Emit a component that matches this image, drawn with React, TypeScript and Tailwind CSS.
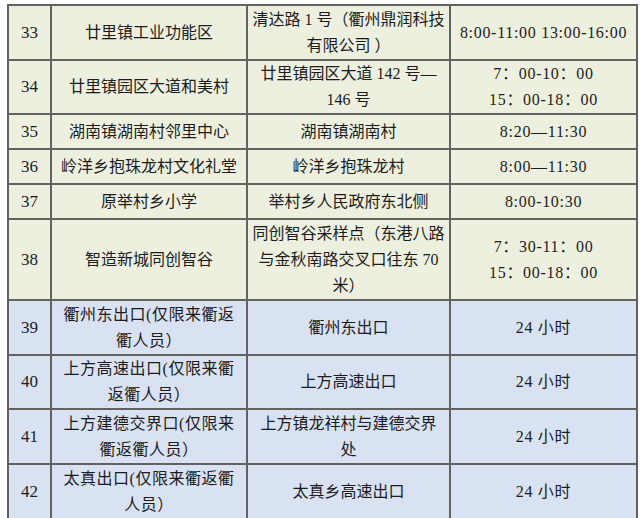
import React from "react";

type Row = {
  no: string;
  name: string[];
  addr: string[];
  time: string[];
  h: string;
  blue?: boolean;
};

const rows: Row[] = [
  { no: "33", name: ["廿里镇工业功能区"], addr: ["清达路 1 号（衢州鼎润科技", "有限公司 ）"], time: ["8:00-11:00 13:00-16:00"], h: "h-[55px]" },
  { no: "34", name: ["廿里镇园区大道和美村"], addr: ["廿里镇园区大道 142 号—", "146 号"], time: ["7：00-10：00", "15：00-18：00"], h: "h-[54px]" },
  { no: "35", name: ["湖南镇湖南村邻里中心"], addr: ["湖南镇湖南村"], time: ["8:20—11:30"], h: "h-[35px]" },
  { no: "36", name: ["岭洋乡抱珠龙村文化礼堂"], addr: ["岭洋乡抱珠龙村"], time: ["8:00—11:30"], h: "h-[35px]" },
  { no: "37", name: ["原举村乡小学"], addr: ["举村乡人民政府东北侧"], time: ["8:00-10:30"], h: "h-[35px]" },
  { no: "38", name: ["智造新城同创智谷"], addr: ["同创智谷采样点（东港八路", "与金秋南路交叉口往东 70", "米）"], time: ["7：30-11：00", "15：00-18：00"], h: "h-[81px]" },
  { no: "39", name: ["衢州东出口(仅限来衢返", "衢人员）"], addr: ["衢州东出口"], time: ["24 小时"], h: "h-[55px]", blue: true },
  { no: "40", name: ["上方高速出口(仅限来衢", "返衢人员）"], addr: ["上方高速出口"], time: ["24 小时"], h: "h-[54px]", blue: true },
  { no: "41", name: ["上方建德交界口(仅限来", "衢返衢人员）"], addr: ["上方镇龙祥村与建德交界", "处"], time: ["24 小时"], h: "h-[55px]", blue: true },
  { no: "42", name: ["太真出口(仅限来衢返衢", "人员）"], addr: ["太真乡高速出口"], time: ["24 小时"], h: "h-[55px]", blue: true },
];

function Lines({ lines }: { lines: string[] }) {
  return (
    <>
      {lines.map((l, i) => (
        <div key={i} className="whitespace-nowrap">
          {l}
        </div>
      ))}
    </>
  );
}

export default function App() {
  return (
    <div
      lang="zh-CN"
      className="w-[640px] h-[518px] overflow-hidden bg-white pl-[7px] pt-[4px] font-['Liberation_Serif','Noto_Sans_CJK_SC',serif] text-[16px] leading-[26px] text-[#1c1c1c]"
    >
      <table className="table-fixed border-collapse w-[629px]">
        <colgroup>
          <col className="w-[43px]" />
          <col className="w-[196px]" />
          <col className="w-[203px]" />
          <col className="w-[187px]" />
        </colgroup>
        <tbody>
          {rows.map((r) => {
            const bg = r.blue ? "bg-[#d9e2f3]" : "bg-[#edf0df]";
            const cell = "border-2 border-[#626262] text-center align-middle p-0";
            return (
              <tr key={r.no} className={`${r.h} ${bg}`}>
                <td className={`${cell} text-[17px]`}>{r.no}</td>
                <td className={`${cell} ${r.blue ? "tracking-[0.5px]" : ""}`}>
                  <Lines lines={r.name} />
                </td>
                <td className={cell}>
                  <Lines lines={r.addr} />
                </td>
                <td className={`${cell} tracking-[0.7px]`}>
                  <Lines lines={r.time} />
                </td>
              </tr>
            );
          })}
        </tbody>
      </table>
    </div>
  );
}
